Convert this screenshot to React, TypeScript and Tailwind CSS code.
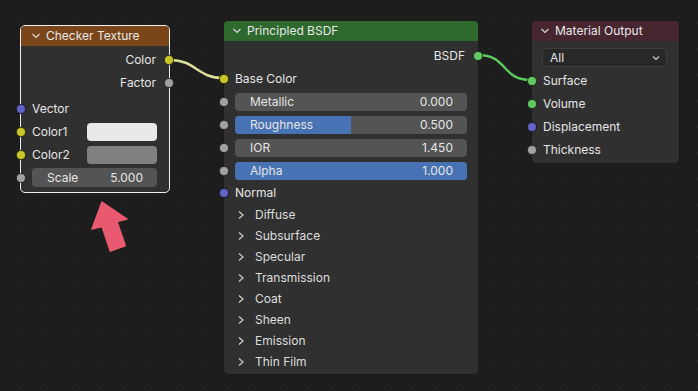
import React from "react";

const font = { fontFamily: "Inter, 'Noto Sans', sans-serif" };

function Socket({ color, side }: { color: string; side: "left" | "right" }) {
  return (
    <span
      className={`absolute top-1/2 -translate-y-1/2 w-[10px] h-[10px] rounded-full border border-black/70 ${color} ${
        side === "left" ? "left-[-5px]" : "right-[-5px]"
      }`}
    />
  );
}

function Chevron() {
  return (
    <svg width="10" height="10" viewBox="0 0 10 10" className="shrink-0">
      <polyline points="1.5,3 5,6.5 8.5,3" fill="none" stroke="#d8d8d8" strokeWidth="1.2" />
    </svg>
  );
}

function Field({ label, value, fill, blue }: { label: string; value: string; fill?: number; blue?: boolean }) {
  return (
    <div className="relative h-[18px] w-full rounded-[4px] bg-[#545454] overflow-hidden">
      {fill !== undefined && <div className="absolute inset-y-0 left-0 bg-[#4772b3]" style={{ width: `${fill}%` }} />}
      {blue && <div className="absolute inset-0 bg-[#4772b3]" />}
      <div className="relative flex h-full items-center justify-between pl-[15px] pr-[14px] text-[12px] text-[#e6e6e6]">
        <span>{label}</span>
        <span>{value}</span>
      </div>
    </div>
  );
}

function Panel({ label }: { label: string }) {
  return (
    <div className="flex h-[21px] items-center pl-[13px] gap-[10px] text-[12px] text-[#dedede]">
      <svg width="8" height="10" viewBox="0 0 8 10">
        <polyline points="2,1.5 6,5 2,8.5" fill="none" stroke="#cfcfcf" strokeWidth="1.2" />
      </svg>
      <span>{label}</span>
    </div>
  );
}

export default function App() {
  return (
    <div
      className="relative w-[698px] h-[391px] overflow-hidden bg-[#1d1d1d] bg-[radial-gradient(circle,#262626_0.8px,transparent_1.2px)] bg-[length:26px_26px] bg-[position:8px_10px]"
      style={font}
    >
      {/* wires */}
      <svg className="absolute inset-0" width="698" height="391">
        <path d="M170,60 C196,60 197,78 223,78" fill="none" stroke="#1a1a1a" strokeWidth="4.5" />
        <path d="M170,60 C196,60 197,78 223,78" fill="none" stroke="#dcdc9c" strokeWidth="2.6" />
        <path d="M478,55 C508,55 501,80 531,80" fill="none" stroke="#1a1a1a" strokeWidth="4" />
        <path d="M478,55 C508,55 501,80 531,80" fill="none" stroke="#5fc85f" strokeWidth="2.4" />
        <polygon
          points="102,202 127,219 117,221.4 125.3,245.8 110.3,251 102,226.6 92,229"
          fill="#e95a70"
          stroke="#e95a70"
          strokeLinejoin="round"
          strokeWidth="1.5"
        />
      </svg>

      {/* Checker Texture */}
      <div className="absolute left-[20px] top-[25px] w-[150px] h-[168px] rounded-[5px] border border-[#f0f0f0] bg-[#303030]">
        <div className="flex h-[20px] items-center gap-[5px] rounded-t-[4px] bg-[#7a4619] pl-[10px] text-[12px] text-[#e8e8e8]">
          <Chevron />
          <span>Checker Texture</span>
        </div>
        <div className="pt-[2px]">
          <div className="relative flex h-[23px] items-center justify-end pr-[13px] text-[12px] text-[#e6e6e6]">
            Color
            <Socket color="bg-[#c7c729]" side="right" />
          </div>
          <div className="relative flex h-[23px] items-center justify-end pr-[13px] text-[12px] text-[#e6e6e6]">
            Factor
            <Socket color="bg-[#a1a1a1]" side="right" />
          </div>
          <div className="h-[3px]" />
          <div className="relative flex h-[23px] items-center pl-[11px] text-[12px] text-[#e6e6e6]">
            Vector
            <Socket color="bg-[#6363c7]" side="left" />
          </div>
          <div className="relative flex h-[23px] items-center justify-between pl-[11px] pr-[12px] text-[12px] text-[#e6e6e6]">
            Color1
            <span className="h-[18px] w-[70px] rounded-[4px] bg-[#e9e9e9]" />
            <Socket color="bg-[#c7c729]" side="left" />
          </div>
          <div className="relative flex h-[23px] items-center justify-between pl-[11px] pr-[12px] text-[12px] text-[#e6e6e6]">
            Color2
            <span className="h-[18px] w-[70px] rounded-[4px] bg-[#808080]" />
            <Socket color="bg-[#c7c729]" side="left" />
          </div>
          <div className="relative flex h-[23px] items-center pl-[11px] pr-[12px]">
            <div className="flex h-[19px] w-full items-center justify-between rounded-[4px] bg-[#545454] pl-[15px] pr-[14px] text-[12px] text-[#e6e6e6]">
              <span>Scale</span>
              <span>5.000</span>
            </div>
            <Socket color="bg-[#a1a1a1]" side="left" />
          </div>
        </div>
      </div>

      {/* Principled BSDF */}
      <div className="absolute left-[223px] top-[20px] w-[256px] h-[355px] rounded-[5px] border border-[#1a1a1a] bg-[#303030]">
        <div className="flex h-[20px] items-center gap-[5px] rounded-t-[4px] bg-[#2e6a2d] pl-[8px] text-[12px] text-[#e8e8e8]">
          <Chevron />
          <span>Principled BSDF</span>
        </div>
        <div className="pt-[3px]">
          <div className="relative flex h-[23px] items-center justify-end pr-[13px] text-[12px] text-[#e6e6e6]">
            BSDF
            <Socket color="bg-[#63c763]" side="right" />
          </div>
          <div className="relative flex h-[23px] items-center pl-[11px] text-[12px] text-[#e6e6e6]">
            Base Color
            <Socket color="bg-[#c7c729]" side="left" />
          </div>
          {[
            { label: "Metallic", value: "0.000" },
            { label: "Roughness", value: "0.500", fill: 50 },
            { label: "IOR", value: "1.450" },
            { label: "Alpha", value: "1.000", blue: true },
          ].map((f) => (
            <div key={f.label} className="relative flex h-[23px] items-center pl-[11px] pr-[11px]">
              <Field label={f.label} value={f.value} fill={f.fill} blue={f.blue} />
              <Socket color="bg-[#a1a1a1]" side="left" />
            </div>
          ))}
          <div className="relative flex h-[22px] items-center pl-[11px] text-[12px] text-[#e6e6e6]">
            Normal
            <Socket color="bg-[#6363c7]" side="left" />
          </div>
          {["Diffuse", "Subsurface", "Specular", "Transmission", "Coat", "Sheen", "Emission", "Thin Film"].map((p) => (
            <Panel key={p} label={p} />
          ))}
        </div>
      </div>

      {/* Material Output */}
      <div className="absolute left-[531px] top-[20px] w-[149px] h-[144px] rounded-[5px] border border-[#1a1a1a] bg-[#303030]">
        <div className="flex h-[20px] items-center gap-[5px] rounded-t-[4px] bg-[#472630] pl-[8px] text-[12px] text-[#e8e8e8]">
          <Chevron />
          <span>Material Output</span>
        </div>
        <div className="px-[10px] pt-[7px] pr-[12px]">
          <div className="flex h-[19px] items-center justify-between rounded-[4px] border border-[#3e3e3e] bg-[#282828] pl-[7px] pr-[6px] text-[12px] text-[#e6e6e6]">
            <span>All</span>
            <svg width="8" height="8" viewBox="0 0 8 8">
              <polyline points="1,2.5 4,5.5 7,2.5" fill="none" stroke="#d0d0d0" strokeWidth="1.2" />
            </svg>
          </div>
        </div>
        <div className="pt-[2px]">
          {[
            { l: "Surface", c: "bg-[#63c763]" },
            { l: "Volume", c: "bg-[#63c763]" },
            { l: "Displacement", c: "bg-[#6363c7]" },
            { l: "Thickness", c: "bg-[#a1a1a1]" },
          ].map((r) => (
            <div key={r.l} className="relative flex h-[23px] items-center pl-[11px] text-[12px] text-[#e6e6e6]">
              {r.l}
              <Socket color={r.c} side="left" />
            </div>
          ))}
        </div>
      </div>
    </div>
  );
}
